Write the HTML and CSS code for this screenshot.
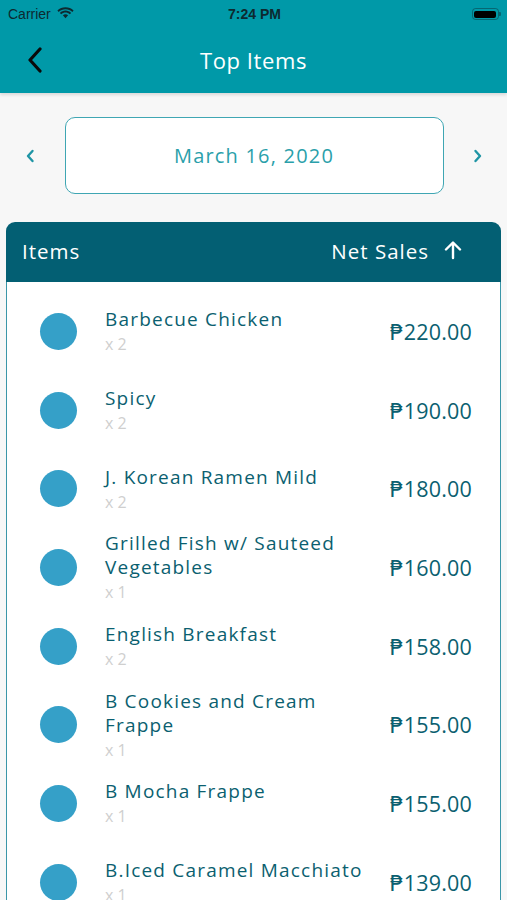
FILE: index.html
```html
<!DOCTYPE html>
<html>
<head>
<meta charset="utf-8">
<link rel="stylesheet" href="styles.css">
</head>
<body>
<div class="app">
  <header class="topbar">
    <div class="status">
      <div class="status-left">
        <span class="carrier">Carrier</span>
        <svg class="wifi" width="17" height="12" viewBox="0 0 17 12"><path d="M8.5 2.2c2.6 0 5 1 6.8 2.7l1.3-1.4C14.4 1.3 11.6.2 8.5.2S2.6 1.3.4 3.5l1.3 1.4C3.5 3.2 5.9 2.2 8.5 2.2z" fill="#0d2a30"/><path d="M8.5 5.6c1.6 0 3.1.6 4.3 1.7l1.3-1.4C12.6 4.5 10.6 3.6 8.5 3.6S4.4 4.5 2.9 5.9l1.3 1.4c1.2-1.1 2.7-1.7 4.3-1.7z" fill="#0d2a30"/><path d="M8.5 7.3c-1 0-1.9.4-2.6 1l2.6 2.9 2.6-2.9c-.7-.6-1.600-1-2.6-1z" fill="#0d2a30"/></svg>
      </div>
      <span class="time">7:24 PM</span>
      <div class="status-right">
        <div class="battery"><div class="battery-fill"></div></div><div class="battery-cap"></div>
      </div>
    </div>
    <div class="navbar">
      <svg class="back" width="16" height="26" viewBox="0 0 16 26"><path d="M13 2 3 13l10 11" fill="none" stroke="#0a0a0a" stroke-width="3.2" stroke-linecap="round" stroke-linejoin="round"/></svg>
      <h1 class="title">Top Items</h1>
      <span class="nav-spacer"></span>
    </div>
  </header>

  <div class="date-row">
    <svg class="chev" width="10" height="14" viewBox="0 0 10 14"><path d="M7.5 2 3 7l4.5 5" fill="none" stroke="#1f95a5" stroke-width="2.4" stroke-linecap="round" stroke-linejoin="round"/></svg>
    <div class="date-box">March 16, 2020</div>
    <svg class="chev" width="10" height="14" viewBox="0 0 10 14"><path d="M2.5 2 7 7l-4.5 5" fill="none" stroke="#1f95a5" stroke-width="2.4" stroke-linecap="round" stroke-linejoin="round"/></svg>
  </div>

  <section class="table">
    <div class="table-head">
      <span class="th">Items</span>
      <span class="th th-right">Net Sales
        <svg class="sort" width="18" height="20" viewBox="0 0 18 20"><path d="M9 18V3M2 9.5 9 2.5l7 7" fill="none" stroke="#fff" stroke-width="2.4" stroke-linecap="round" stroke-linejoin="round"/></svg>
      </span>
    </div>
    <div class="table-body">
      <div class="row"><span class="dot"></span><div class="info"><div class="name">Barbecue Chicken</div><div class="qty">x 2</div></div><div class="price">₱220.00</div></div>
      <div class="row"><span class="dot"></span><div class="info"><div class="name">Spicy</div><div class="qty">x 2</div></div><div class="price">₱190.00</div></div>
      <div class="row"><span class="dot"></span><div class="info"><div class="name">J. Korean Ramen Mild</div><div class="qty">x 2</div></div><div class="price">₱180.00</div></div>
      <div class="row"><span class="dot"></span><div class="info"><div class="name">Grilled Fish w/ Sauteed Vegetables</div><div class="qty">x 1</div></div><div class="price">₱160.00</div></div>
      <div class="row"><span class="dot"></span><div class="info"><div class="name">English Breakfast</div><div class="qty">x 2</div></div><div class="price">₱158.00</div></div>
      <div class="row"><span class="dot"></span><div class="info"><div class="name">B Cookies and Cream Frappe</div><div class="qty">x 1</div></div><div class="price">₱155.00</div></div>
      <div class="row"><span class="dot"></span><div class="info"><div class="name">B Mocha Frappe</div><div class="qty">x 1</div></div><div class="price">₱155.00</div></div>
      <div class="row"><span class="dot"></span><div class="info"><div class="name">B.Iced Caramel Macchiato</div><div class="qty">x 1</div></div><div class="price">₱139.00</div></div>
    </div>
  </section>
</div>
</body>
</html>
```

FILE: styles.css
```css
* { box-sizing: border-box; margin: 0; padding: 0; }
html, body { width: 507px; height: 900px; overflow: hidden; }
body { background: #f7f7f7; font-family: "Open Sans", "DejaVu Sans", sans-serif; }
.app { display: flex; flex-direction: column; height: 900px; }

.topbar { background: #0099a8; box-shadow: 0 2px 3px rgba(0,0,0,0.12); }
.status { height: 28px; display: flex; align-items: center; justify-content: space-between; padding: 0 6px 0 8px; }
.status-left { display: flex; align-items: center; gap: 6px; width: 120px; }
.carrier { font-family: "Liberation Sans", sans-serif; font-size: 14px; color: #0d2a30; }
.wifi { margin-top: -2px; }
.time { font-family: "Liberation Sans", sans-serif; font-weight: bold; font-size: 14px; color: #0d2a30; }
.status-right { width: 120px; display: flex; justify-content: flex-end; align-items: center; }
.battery { width: 27px; height: 12px; border: 1px solid rgba(13,42,48,0.45); border-radius: 3.5px; padding: 1.5px; }
.battery-fill { width: 100%; height: 100%; background: #000; border-radius: 2px; }
.battery-cap { width: 2px; height: 4px; background: rgba(13,42,48,0.45); border-radius: 0 1px 1px 0; }

.navbar { height: 65px; display: flex; align-items: center; justify-content: space-between; padding: 0 0 2px 27px; }
.back { display: block; }
.title { font-weight: 400; font-size: 22px; letter-spacing: 0.6px; color: #fff; margin-left: -27px; }
.nav-spacer { width: 16px; }

.date-row { display: flex; align-items: center; justify-content: space-between; padding: 0 24px 0 25px; margin-top: 24px; }
.date-box { width: 379px; height: 77px; border: 1.5px solid #3fa6b3; border-radius: 10px; background: #fff; display: flex; align-items: center; justify-content: center; font-size: 20px; color: #2a9faa; letter-spacing: 1.2px; }

.table { margin: 28px 6px 0; flex: 1; display: flex; flex-direction: column; }
.table-head { height: 60px; background: #035f73; border-radius: 9px 9px 0 0; display: flex; align-items: center; justify-content: space-between; padding: 0 39px 2px 16px; }
.th { color: #fff; font-size: 20.5px; letter-spacing: 1px; display: flex; align-items: center; gap: 15px; }
.sort { margin-top: -2px; }
.table-body { flex: 1; background: #fff; border: 1.5px solid #3b96a8; border-top: none; padding-top: 10px; }

.row { height: 78.7px; display: flex; align-items: center; padding: 0 28px 0 33px; }
.dot { width: 37px; height: 37px; border-radius: 50%; background: #35a0c8; flex: none; }
.info { flex: 1; padding-left: 28px; padding-right: 8px; }
.name { font-size: 19px; line-height: 24px; letter-spacing: 1.2px; color: #0b5f70; max-width: 270px; }
.qty { font-size: 16px; line-height: 22px; margin-top: 2px; color: #cfcfcf; }
.price { font-size: 21.5px; color: #0b5f70; letter-spacing: 0.2px; }
```
